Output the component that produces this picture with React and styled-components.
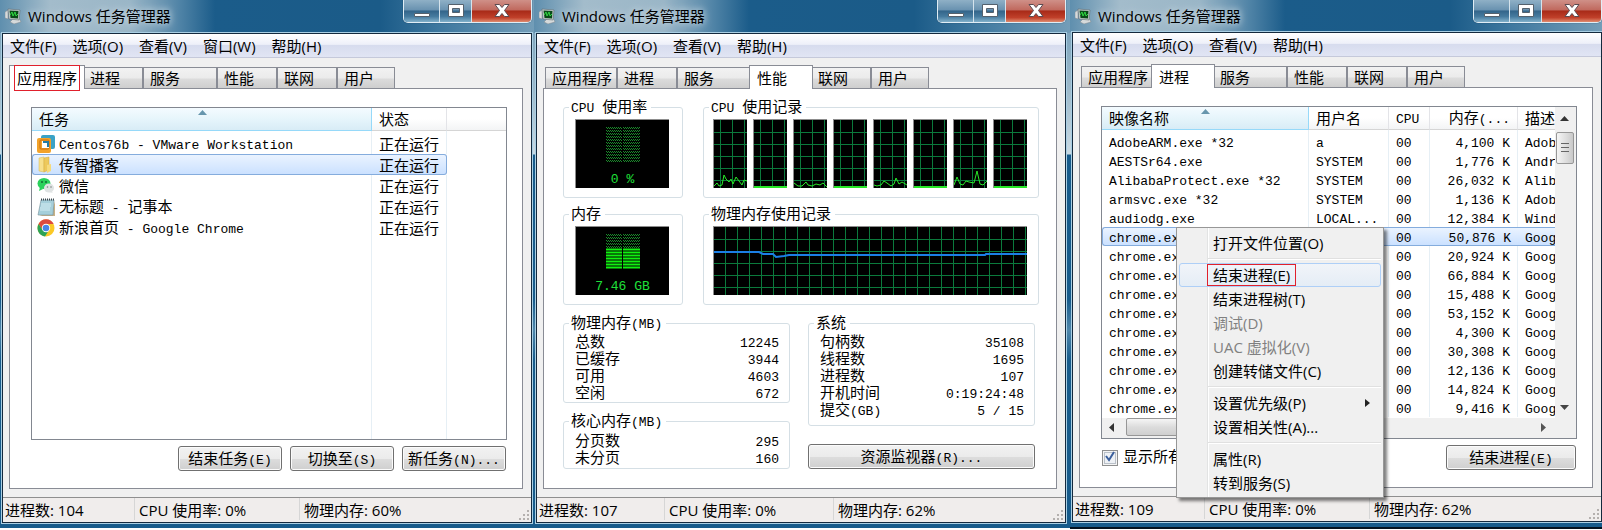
import React from "react";
import styled, { createGlobalStyle, css } from "styled-components";

const uiFont = '"Open Sans", "Noto Sans CJK SC", sans-serif';
const listFont = '"Noto Sans CJK SC", sans-serif';
const monoFont = '"Liberation Mono", "Noto Sans CJK SC", monospace';

const GlobalStyle = createGlobalStyle`
  * { box-sizing: border-box; }
  body { margin: 0; background: #fff; color: #000; font: 15px/20px ${uiFont}; }
  button, input { font: inherit; color: inherit; margin: 0; }
`;

const Desktop = styled.main`
  display: grid;
  grid-template-columns: 534fr 536fr 532fr;
  align-items: start;
  overflow: hidden;
`;

const Frame = styled.section`
  position: relative;
  min-width: 0;
  padding: 0 ${(p) => p.$right}px 5px ${(p) => p.$left}px;
  background: linear-gradient(180deg, #6f9ab6 0, #9db9ca 90px, #c9d9e3 154px, #175b8b 155px, #175b8b 300px, #4f86aa 330px, #175b8b 360px);
  ${(p) => p.$edge && css`border-bottom: 2px solid #04121f;`}
`;

const TitleBar = styled.header`
  display: flex;
  justify-content: space-between;
  align-items: flex-start;
  height: ${(p) => p.$height}px;
  margin: 0 -${(p) => p.$right}px 0 -${(p) => p.$left}px;
  padding-right: ${(p) => p.$right}px;
  background: linear-gradient(90deg, #5f8fae 0, #a3bccb 50px, #9ab6c7 130px, #4f83a6 180px, #1b5c8a 215px, #1b5b88 380px, #3e789f 440px, #739db8 100%);
`;

const Title = styled.h1`
  display: flex;
  align-items: center;
  gap: 6px;
  height: 32px;
  margin: 0;
  padding-left: 5px;
  font-size: 15px;
  font-weight: 400;
  white-space: nowrap;
  text-shadow: 0 0 6px #c4d5df, 0 0 10px #c4d5df;
`;

const Controls = styled.div`
  display: flex;
  height: 23px;
  border: 1px solid #e0edf5;
  border-top: 0;
  border-radius: 0 0 5px 5px;
  overflow: hidden;
  box-shadow: 0 0 1px #0c2b44;
`;

const Control = styled.button`
  display: grid;
  place-items: center;
  width: ${(p) => (p.$close ? 59 : p.$wide ? 36 : 32)}px;
  padding: 0;
  border: 0;
  border-right: ${(p) => (p.$close ? 0 : 1)}px solid #d5e3ec;
  background: ${(p) =>
    p.$close
      ? "linear-gradient(180deg, #cf9088 0, #c0695e 45%, #a82a18 50%, #c0402a 80%, #e08c70 100%)"
      : "linear-gradient(180deg, #8fb0c6 0, #6992b0 45%, #33658a 50%, #467b9f 75%, #82b1cb 100%)"};
`;

const Client = styled.div`
  border: 1px solid #14293d;
  box-shadow: 0 0 0 1px #a9cfe4;
  background: #f0f0f0;
`;

const MenuBar = styled.nav`
  display: flex;
  gap: 16px;
  height: 24px;
  padding-left: 7px;
  border-bottom: 1px solid #c5c9da;
  background: linear-gradient(180deg, #fff 0, #eef0f9 45%, #d7dcee 50%, #e1e5f4 100%);
`;

const MenuButton = styled.button`
  padding: 0;
  border: 0;
  background: none;
  line-height: 24px;
  white-space: nowrap;
`;

const Tabs = styled.div`
  display: flex;
  align-items: flex-end;
  height: 30px;
  padding-left: 8px;
`;

const Tab = styled.button`
  position: relative;
  width: ${(p) => p.$width}px;
  height: 21px;
  padding: 0 0 0 6px;
  border: 1px solid #898c95;
  border-bottom: 0;
  background: linear-gradient(180deg, #f2f2f2 0, #ebebeb 50%, #dcdcdc 55%, #cecece 100%);
  font: 15px/20px ${listFont};
  text-align: left;
  white-space: nowrap;
  ${(p) =>
    p.$selected &&
    css`
      z-index: 1;
      width: ${p.$width + 4}px;
      height: 24px;
      margin: 0 -2px -1px;
      padding-left: 7px;
      background: #fff;
    `}
`;

const Marked = styled.span`
  position: relative;
  &::after {
    content: "";
    position: absolute;
    inset: ${(p) => p.$inset || "-1px -4px"};
    border: 1px solid #e0202c;
  }
`;

const Panel = styled.div`
  margin: 0 8px 8px 6px;
  padding: ${(p) => p.$padding || "18px 15px 17px 21px"};
  border: 1px solid #898c95;
  background: #fff;
`;

const StatusBar = styled.footer`
  display: flex;
  position: relative;
  height: 25px;
  border-top: 1px solid #8f8f8f;
  background: #f0edec;
`;

const StatusCell = styled.span`
  width: ${(p) => (p.$width ? p.$width + "px" : "auto")};
  margin-bottom: 2px;
  padding-left: ${(p) => (p.$first ? 2 : 4)}px;
  border-right: ${(p) => (p.$width ? 1 : 0)}px solid #d6d6d6;
  line-height: 25px;
  white-space: nowrap;
`;

const Grip = styled.svg`
  position: absolute;
  right: 1px;
  bottom: 1px;
`;

const Mono = styled.span`
  font: 13px ${monoFont};
  line-height: inherit;
`;

/* Chinese text keeps the list font; Latin runs are set in the fixed-width one. */
function Mixed({ children }) {
  return String(children)
    .split(/([\x20-\x7e]+)/)
    .filter(Boolean)
    .map((run, i) => (/^[\x20-\x7e]/.test(run) ? <Mono key={i}>{run}</Mono> : run));
}

const ListBox = styled.div`
  display: flex;
  flex-direction: column;
  height: 333px;
  border: 1px solid #828790;
  background: #fff;
`;

const Table = styled.table`
  width: 100%;
  height: ${(p) => (p.$fill ? "100%" : "auto")};
  table-layout: fixed;
  border-collapse: separate;
  border-spacing: 0;
  font: 15px ${listFont};
  white-space: pre;
`;

const Th = styled.th`
  position: relative;
  width: ${(p) => (p.$width ? p.$width + "px" : "auto")};
  height: 23px;
  padding: 0 7px;
  border-right: 1px solid ${(p) => (p.$sorted ? "#96d9f9" : "#e3e4e8")};
  border-bottom: 1px solid ${(p) => (p.$sorted ? "#96d9f9" : "#d5d5d5")};
  background: ${(p) =>
    p.$sorted
      ? "linear-gradient(180deg, #f4fbff 0, #e6f5fb 50%, #d8ecf6 100%)"
      : "linear-gradient(180deg, #fff 0, #fff 50%, #f3f4f5 100%)"};
  line-height: 18px;
  font-weight: 400;
  text-align: ${(p) => (p.$end ? "right" : "left")};
  overflow: hidden;
  &:last-child { border-right: 0; }
`;

const SortArrow = styled.svg`
  position: absolute;
  top: 2px;
  left: 50%;
  margin-left: -4px;
`;

const Td = styled.td`
  height: ${(p) => (p.$height ? p.$height + "px" : "auto")};
  padding: 0 7px;
  border-right: 1px solid #e6eff5;
  line-height: 13px;
  text-align: ${(p) => (p.$end ? "right" : "left")};
  overflow: hidden;
  &:last-child { border-right: 0; }
  ${(p) =>
    p.$selected &&
    css`
      border: solid #84acdd;
      border-width: 1px 0;
      background: linear-gradient(180deg, #eaf3ff, #cbe1ff);
      &:first-child { border-left-width: 1px; padding-left: 6px; border-radius: 3px 0 0 3px; }
      &:nth-child(2) { border-right-width: ${p.$closed ? 1 : 0}px; border-radius: ${p.$closed ? "0 3px 3px 0" : 0}; }
    `}
`;

const TaskName = styled.span`
  display: flex;
  align-items: center;
  gap: 4px;
  height: 19px;
  margin-left: -2px;
`;

const Actions = styled.div`
  display: flex;
  align-items: center;
  justify-content: flex-end;
  gap: 8px;
  margin-top: 6px;
  padding-right: 1px;
`;

const Button = styled.button`
  width: ${(p) => (p.$width ? p.$width + "px" : "100%")};
  height: 25px;
  padding: 0;
  border: 1px solid #707070;
  border-radius: 3px;
  box-shadow: inset 0 0 0 1px #fbfbfb;
  background: linear-gradient(180deg, #f2f2f2 0, #ebebeb 50%, #dddddd 52%, #cfcfcf 100%);
  font: 15px/22px ${listFont};
  white-space: nowrap;
`;

const Row = styled.div`
  display: flex;
  gap: ${(p) => p.$gap}px;
  margin-top: ${(p) => p.$top || 0}px;
  margin-right: ${(p) => p.$right || 0}px;
`;

const Column = styled.div`
  display: flex;
  flex-direction: column;
  flex: 1;
  gap: ${(p) => p.$gap}px;
`;

const Group = styled.fieldset`
  flex: ${(p) => (p.$width ? `0 0 ${p.$width}px` : "1 1 auto")};
  min-width: 0;
  margin: 0;
  padding: ${(p) => p.$padding};
  border: 1px solid #d5dfe5;
  border-radius: 3px;
  font: 15px/16px ${listFont};
`;

const Legend = styled.legend`
  padding: 0 4px 0 2px;
  height: 18px;
  white-space: pre;
`;

const Meter = styled.div`
  display: flex;
  flex-direction: column;
  align-items: center;
  gap: 10px;
  width: 94px;
  height: 69px;
  margin-left: 6px;
  padding-top: 6px;
  border: solid #8c8c8c;
  border-width: 1px 0 0 1px;
  background: #000;
  color: #1fe03a;
  line-height: 16px;
`;

const Charts = styled.div`
  display: flex;
  justify-content: space-between;
  margin: 0 6px 0 4px;
`;

const Chart = styled.svg`
  display: block;
  flex: 0 1 ${(p) => p.$basis};
  min-width: 0;
  height: 69px;
  border: solid #8c8c8c;
  border-width: 1px 0 0 1px;
  background: #000;
`;

const Stats = styled.dl`
  margin: 0;
  padding: 0 5px 0 6px;
`;

const Stat = styled.div`
  display: flex;
  justify-content: space-between;
  line-height: 17px;
  white-space: pre;
  font-size: 15px;
  dt, dd { margin: 0; height: 17px; }
`;

const ListBody = styled.div`
  display: flex;
  height: 311px;
`;

const TableClip = styled.div`
  flex: 1;
  min-width: 0;
  overflow: hidden;
`;

const VScroll = styled.div`
  display: flex;
  flex-direction: column;
  align-items: center;
  width: 21px;
  padding: 9px 2px 8px 0;
  background: #f0f0f0;
`;

const VThumb = styled.div`
  display: grid;
  place-items: center;
  width: 18px;
  height: 32px;
  margin: 11px 0 auto;
  border: 1px solid #979797;
  border-radius: 2px;
  background: linear-gradient(90deg, #f5f5f5, #dcdcdc 60%, #c9c9c9);
`;

const HScroll = styled.div`
  display: flex;
  align-items: center;
  flex: 1;
  padding: 0 30px 2px 7px;
  background: #f0f0f0;
`;

const HThumb = styled.div`
  width: 220px;
  height: 18px;
  margin: 0 auto 0 12px;
  border: 1px solid #979797;
  border-radius: 2px;
  background: linear-gradient(180deg, #f5f5f5, #dcdcdc 50%, #cfcfcf);
`;

const CheckLabel = styled.label`
  display: flex;
  align-items: center;
  position: relative;
  gap: 5px;
  margin: 0 auto 0 1px;
  font: 15px/20px ${listFont};
  white-space: nowrap;
  svg { position: absolute; left: 2px; top: 4px; pointer-events: none; }
`;

const CheckBox = styled.input`
  appearance: none;
  width: 16px;
  height: 16px;
  border: 1px solid #8e8f8f;
  box-shadow: inset 0 0 0 1px #f4f4f4, inset 0 0 0 2px #b9c0c8;
  background: #eef1f5;
`;

const ContextMenu = styled.div`
  position: absolute;
  z-index: 2;
  left: 106px;
  top: 227px;
  width: 208px;
  padding: 3px 2px 2px;
  border: 1px solid #979797;
  box-shadow: 3px 3px 3px rgba(0, 0, 0, 0.5);
  background: linear-gradient(90deg, #f0f0f0 30px, #e2e3e3 30px, #e2e3e3 31px, #fff 31px, #fff 32px, #f0f0f0 32px);
`;

const ContextItem = styled.button`
  display: flex;
  align-items: center;
  justify-content: space-between;
  width: 100%;
  height: 24px;
  padding: 0 10px 0 33px;
  border: 1px solid ${(p) => (p.$hot ? "#aecff7" : "transparent")};
  border-radius: 3px;
  background: ${(p) => (p.$hot ? "linear-gradient(180deg, rgba(241,245,251,.8), rgba(226,236,247,.8))" : "none")};
  line-height: 22px;
  white-space: nowrap;
  &:disabled { color: #808080; }
`;

const Separator = styled.hr`
  height: 2px;
  margin: 3px 0 3px 29px;
  border: 0;
  border-top: 1px solid #e0e0e0;
  background: #fff;
`;

function AppIcon() {
  return (
    <svg width="17" height="16" viewBox="0 0 17 16">
      <path d="M0 4 3 2v9l-3-1zM8 11l6-1 2 4-7 2-4-2z" fill="#d6dadb" stroke="#7c878c" strokeWidth=".5" />
      <path d="M3 1 15 2 14 12 4 11Z" fill="#c9cfd1" stroke="#5f6b70" strokeWidth=".6" />
      <path d="M4.500 2.500 13.500 3 13 10.500 5.500 10Z" fill="#0a4a18" />
      <path d="M5 7 7 4l1 4 2-4 1 4 2-2" fill="none" stroke="#31d843" />
    </svg>
  );
}

const icons = {
  vmware: (
    <>
      <rect x="4" y="0" width="14" height="14" rx="2" fill="#3aa2c6" />
      <rect x="0" y="3" width="14" height="15" rx="2" fill="#f3a32a" />
      <rect x="3" y="5" width="9" height="9" rx="1" fill="none" stroke="#c46c12" />
      <rect x="5" y="6" width="7" height="7" fill="#fff" />
      <path d="M6 6h6v6h-2V8H6z" fill="#237ba5" />
    </>
  ),
  folder: (
    <>
      <path d="M2 2 7 1v15l-5-1z" fill="#f7e08c" stroke="#d9b950" strokeWidth=".5" />
      <path d="M7 2 12 1v13l-5 2z" fill="#edc95c" stroke="#d4a93b" strokeWidth=".5" />
      <path d="M10 9 14 8v7l-4 2z" fill="#f6da7c" />
    </>
  ),
  wechat: (
    <>
      <ellipse cx="7" cy="6.500" rx="6.500" ry="5.500" fill="#2bd15c" />
      <path d="M3 10 2 14l4-2z" fill="#2bd15c" />
      <ellipse cx="12" cy="11" rx="5" ry="4.500" fill="#dfe3e3" />
      <path d="M14 14l2 2-4-1z" fill="#dfe3e3" />
      <g fill="#126b30"><circle cx="5" cy="5" r="1" /><circle cx="9" cy="5" r="1" /></g>
      <g fill="#7c8585"><circle cx="10.500" cy="10" r=".8" /><circle cx="14" cy="10" r=".8" /></g>
    </>
  ),
  notepad: (
    <>
      <path d="M15 14 18 3v15H2z" fill="#b99d68" opacity=".8" />
      <path d="M4 2h13l-1 15H1z" fill="#a5cfda" stroke="#76909a" strokeWidth=".6" />
      <path d="M4 6h10M4 8h10M3 10h10M3 12h10" stroke="#d5edf2" />
      <path d="M4 1.500h13" stroke="#3e4c52" strokeWidth="2" strokeDasharray="1 1" />
    </>
  ),
  chrome: (
    <>
      <circle cx="9" cy="9" r="8.500" fill="#fbc926" />
      <path d="M1.500 5A8.500 8.500 0 0 1 16.700 5H9a4 4 0 0 0-4 5z" fill="#dd4b3e" />
      <path d="M1.500 5A8.500 8.500 0 0 0 8 17.500L12 11a4 4 0 0 1-7-1z" fill="#2ea356" />
      <circle cx="9" cy="9" r="4.200" fill="#fff" />
      <circle cx="9" cy="9" r="3.300" fill="#4a86e6" />
    </>
  ),
};

const tabList = [
  ["应用程序", 72],
  ["进程", 60],
  ["服务", 74],
  ["性能", 60],
  ["联网", 60],
  ["用户", 58],
];

function TaskWindow({ left, right, titleHeight = 33, edge, menus, active, markTab, status, panelPadding, overlay, children }) {
  return (
    <Frame $left={left} $right={right} $edge={edge}>
      <TitleBar $height={titleHeight} $left={left} $right={right}>
        <Title><AppIcon />Windows 任务管理器</Title>
        <Controls>
          <Control $wide aria-label="最小化">
            <svg width="18" height="16"><path d="M1.500 10.500h15v3h-15z" fill="#fff" stroke="#54616d" /></svg>
          </Control>
          <Control aria-label="最大化">
            <svg width="18" height="16"><path d="M1.500 1.500h15v12h-15zM5.500 5.500v4h7v-4z" fillRule="evenodd" fill="#fff" stroke="#54616d" /></svg>
          </Control>
          <Control $close aria-label="关闭">
            <svg width="18" height="16"><path d="M2 1.500h4.500L9 4.500l2.500-3H16L11.500 7.500l4.500 6h-4.500L9 10.500l-2.500 3H2l4.500-6z" fill="#fff" stroke="#5b4a50" /></svg>
          </Control>
        </Controls>
      </TitleBar>
      <Client>
        <MenuBar>{menus.map((m) => <MenuButton key={m}>{m}</MenuButton>)}</MenuBar>
        <Tabs role="tablist">
          {tabList.map(([name, width]) => (
            <Tab key={name} role="tab" aria-selected={name === active} $width={width} $selected={name === active}>
              {markTab && name === active ? <Marked $inset="-2px -3px -3px">{name}</Marked> : name}
            </Tab>
          ))}
        </Tabs>
        <Panel $padding={panelPadding}>{children}</Panel>
        <StatusBar>
          <StatusCell $first $width={status.widths[0]}>进程数: {status.count}</StatusCell>
          <StatusCell $width={status.widths[1]}>CPU 使用率: 0%</StatusCell>
          <StatusCell>物理内存: {status.memory}</StatusCell>
          <Grip width="12" height="12" fill="#b4b0ae">
            <path d="M9 1h2v2H9zM9 5h2v2H9zM5 5h2v2H5zM9 9h2v2H9zM5 9h2v2H5zM1 9h2v2H1z" />
          </Grip>
        </StatusBar>
      </Client>
      {overlay}
    </Frame>
  );
}

function Arrow() {
  return <SortArrow width="9" height="5"><path d="M0 5 4.500 0 9 5z" fill="#6796ad" /></SortArrow>;
}

function Spacer({ columns, height }) {
  return (
    <tr aria-hidden="true">
      {Array.from({ length: columns }, (_, i) => <Td key={i} $height={height} />)}
    </tr>
  );
}

const tasks = [
  ["vmware", "Centos76b - VMware Workstation"],
  ["folder", "传智播客"],
  ["wechat", "微信"],
  ["notepad", "无标题 - 记事本"],
  ["chrome", "新浪首页 - Google Chrome"],
];

function Applications() {
  return (
    <>
      <ListBox>
        <Table $fill>
          <thead>
            <tr>
              <Th $sorted>任务<Arrow /></Th>
              <Th $width={75}>状态</Th>
              <Th $width={59} />
            </tr>
          </thead>
          <tbody>
            <Spacer columns={3} height={2} />
            {tasks.map(([icon, name], i) => (
              <tr key={name}>
                <Td $height={21} $selected={i === 1}>
                  <TaskName><svg width="18" height="18">{icons[icon]}</svg><span><Mixed>{name}</Mixed></span></TaskName>
                </Td>
                <Td $height={21} $selected={i === 1} $closed>正在运行</Td>
                <Td $height={21} />
              </tr>
            ))}
            <Spacer columns={3} />
          </tbody>
        </Table>
      </ListBox>
      <Actions>
        <Button $width={104}><Mixed>结束任务(E)</Mixed></Button>
        <Button $width={104}><Mixed>切换至(S)</Mixed></Button>
        <Button $width={104}><Mixed>新任务(N)...</Mixed></Button>
      </Actions>
    </>
  );
}

function LevelMeter({ lit, label }) {
  const rows = Array.from({ length: 12 }, (_, i) => i);
  return (
    <Meter>
      <svg width="34" height="36">
        {rows.map((i) => {
          const on = i >= 12 - lit;
          return (
            <g key={i} stroke={on ? "#10f010" : "#1b8a2b"} strokeWidth={on ? 2 : 1} strokeDasharray={on ? "none" : "1 1"}>
              <path d={`M0 ${i * 3 + 1}.500h16M17 ${i * 3 + 1}.500h17`} />
              {!on && <path d={`M1 ${i * 3 + 2}.500h15M18 ${i * 3 + 2}.500h16`} />}
            </g>
          );
        })}
      </svg>
      <Mono>{label}</Mono>
    </Meter>
  );
}

function gridPath(width, start) {
  let d = "";
  for (let x = start; x < width; x += 12) d += `M${x}.5 0v68`;
  for (let y = 12; y < 68; y += 12) d += `M0 ${y}.5h${width}`;
  return d;
}

const idle = "M0 67h33";
const cpuLines = [
  "M0 66 3 63 5 66 8 65 10 55 12 59 15 62 17 59 19 64 22 57 25 61 28 65 30 60 33 61",
  idle,
  "M0 63 4 66 8 66 12 62 14 65 18 66 22 64 26 65 29 63 33 67",
  idle,
  "M0 65 3 66 7 65 10 61 13 63 17 66 20 64 22 58 25 64 28 62 33 65",
  idle,
  "M0 65 3 57 6 64 9 65 12 61 15 62 20 63 23 51 26 64 29 65 33 61",
  idle,
];

function StatGroup({ title, padding, rows }) {
  return (
    <Group $padding={padding}>
      <Legend><Mixed>{title}</Mixed></Legend>
      <Stats>
        {rows.map(([k, v]) => (
          <Stat key={k}><dt><Mixed>{k}</Mixed></dt><dd><Mono>{v}</Mono></dd></Stat>
        ))}
      </Stats>
    </Group>
  );
}

function Performance() {
  return (
    <>
      <Row $gap={20}>
        <Group $width={120} $padding="3px 5px 9px"><Legend><Mixed>CPU 使用率</Mixed></Legend><LevelMeter lit={0} label="0 %" /></Group>
        <Group $padding="3px 5px 9px">
          <Legend><Mixed>CPU 使用记录</Mixed></Legend>
          <Charts>
            {cpuLines.map((d, i) => (
              <Chart key={i} $basis="34px" viewBox="0 0 33 68" preserveAspectRatio="none">
                <path d={gridPath(33, 6)} stroke="#0b7a3c" />
                <path d={d} fill="none" stroke="#28e828" strokeWidth={d === idle ? 2 : 1} />
              </Chart>
            ))}
          </Charts>
        </Group>
      </Row>
      <Row $gap={20} $top={7}>
        <Group $width={120} $padding="3px 5px 9px"><Legend>内存</Legend><LevelMeter lit={7} label="7.46 GB" /></Group>
        <Group $padding="3px 5px 9px">
          <Legend>物理内存使用记录</Legend>
          <Charts>
            <Chart $basis="100%" viewBox="0 0 313 68" preserveAspectRatio="none">
              <path d={gridPath(313, 11)} stroke="#0b7a3c" />
              <path d="M0 25h45l4 2h10l3 3 8-1 5-1h196l1-1h41" fill="none" stroke="#1b7fe6" strokeWidth="2" />
            </Chart>
          </Charts>
        </Group>
      </Row>
      <Row $gap={18} $top={9} $right={4}>
        <Column $gap={9}>
          <StatGroup title="物理内存(MB)" padding="0 5px 2px" rows={[["总数", "12245"], ["已缓存", "3944"], ["可用", "4603"], ["空闲", "672"]]} />
          <StatGroup title="核心内存(MB)" padding="1px 5px 3px" rows={[["分页数", "295"], ["未分页", "160"]]} />
        </Column>
        <Column $gap={18}>
          <StatGroup
            title="系统"
            padding="0 5px 6px"
            rows={[["句柄数", "35108"], ["线程数", "1695"], ["进程数", "107"], ["开机时间", "0:19:24:48"], ["提交(GB)", "5 / 15"]]}
          />
          <Button><Mixed>资源监视器(R)...</Mixed></Button>
        </Column>
      </Row>
    </>
  );
}

const processes = [
  ["AdobeARM.exe *32", "a", "4,100 K", "Adobe"],
  ["AESTSr64.exe", "SYSTEM", "1,776 K", "Andrea"],
  ["AlibabaProtect.exe *32", "SYSTEM", "26,032 K", "Alibaba"],
  ["armsvc.exe *32", "SYSTEM", "1,136 K", "Adobe"],
  ["audiodg.exe", "LOCAL...", "12,384 K", "Windows"],
  ...["50,876", "20,924", "66,884", "15,488", "53,152", "4,300", "30,308", "12,136", "14,824", "9,416"].map((m) => [
    "chrome.exe", "a", `${m} K`, "Google",
  ]),
];

function Processes() {
  return (
    <>
      <ListBox>
        <ListBody>
          <TableClip>
            <Table>
              <thead>
                <tr>
                  <Th $sorted>映像名称<Arrow /></Th>
                  <Th $width={80}>用户名</Th>
                  <Th $width={41}><Mono>CPU</Mono></Th>
                  <Th $width={88} $end><Mixed>内存(...</Mixed></Th>
                  <Th $width={37}>描述</Th>
                </tr>
              </thead>
              <tbody>
                <Spacer columns={5} height={2} />
                {processes.map(([name, user, memory, info], i) => {
                  const look = { $height: 19, $selected: i === 5 };
                  return (
                    <tr key={i}>
                      <Td {...look}><Mono>{name}</Mono></Td>
                      <Td {...look}><Mono>{user}</Mono></Td>
                      <Td {...look}><Mono>00</Mono></Td>
                      <Td {...look} $end><Mono>{memory}</Mono></Td>
                      <Td {...look}><Mono>{info}</Mono></Td>
                    </tr>
                  );
                })}
              </tbody>
            </Table>
          </TableClip>
          <VScroll>
            <svg width="9" height="5"><path d="M0 5 4.500 0 9 5z" fill="#333" /></svg>
            <VThumb><svg width="8" height="10"><path d="M0 .5h8M0 4.500h8M0 8.500h8" stroke="#666" /></svg></VThumb>
            <svg width="9" height="5"><path d="M0 0 4.500 5 9 0z" fill="#444" /></svg>
          </VScroll>
        </ListBody>
        <HScroll>
          <svg width="5" height="9"><path d="M5 0 0 4.500 5 9z" fill="#333" /></svg>
          <HThumb />
          <svg width="5" height="9"><path d="M0 0 5 4.500 0 9z" fill="#555" /></svg>
        </HScroll>
      </ListBox>
      <Actions>
        <CheckLabel>
          <CheckBox type="checkbox" defaultChecked />
          <svg width="12" height="13"><path d="M2 6 5 10 10 2" fill="none" stroke="#3b5f9c" strokeWidth="2" /></svg>
          <span><Mixed>显示所有用户的进程(S)</Mixed></span>
        </CheckLabel>
        <Button $width={130}><Mixed>结束进程(E)</Mixed></Button>
      </Actions>
    </>
  );
}

function ProcessMenu() {
  return (
    <ContextMenu role="menu">
      <ContextItem role="menuitem">打开文件位置(O)</ContextItem>
      <Separator />
      <ContextItem role="menuitem" $hot><Marked $inset="0 -6px">结束进程(E)</Marked></ContextItem>
      <ContextItem role="menuitem">结束进程树(T)</ContextItem>
      <ContextItem role="menuitem" disabled>调试(D)</ContextItem>
      <ContextItem role="menuitem" disabled>UAC 虚拟化(V)</ContextItem>
      <ContextItem role="menuitem">创建转储文件(C)</ContextItem>
      <Separator />
      <ContextItem role="menuitem">
        设置优先级(P)
        <svg width="5" height="8"><path d="M0 0 5 4 0 8z" fill="#222" /></svg>
      </ContextItem>
      <ContextItem role="menuitem">设置相关性(A)...</ContextItem>
      <Separator />
      <ContextItem role="menuitem">属性(R)</ContextItem>
      <ContextItem role="menuitem">转到服务(S)</ContextItem>
    </ContextMenu>
  );
}

const shortMenus = ["文件(F)", "选项(O)", "查看(V)", "帮助(H)"];

export default function App() {
  return (
    <>
      <GlobalStyle />
      <Desktop>
        <TaskWindow
          left={2}
          right={2}
          menus={["文件(F)", "选项(O)", "查看(V)", "窗口(W)", "帮助(H)"]}
          active="应用程序"
          markTab
          status={{ count: 104, memory: "60%", widths: [132, 165] }}
        >
          <Applications />
        </TaskWindow>
        <TaskWindow
          left={2}
          right={4}
          menus={shortMenus}
          active="性能"
          panelPadding="9px 17px 19px 19px"
          status={{ count: 107, memory: "62%", widths: [128, 169] }}
        >
          <Performance />
        </TaskWindow>
        <TaskWindow
          left={2}
          right={0}
          titleHeight={32}
          edge
          menus={shortMenus}
          active="进程"
          status={{ count: 109, memory: "62%", widths: [132, 165] }}
          overlay={<ProcessMenu />}
        >
          <Processes />
        </TaskWindow>
      </Desktop>
    </>
  );
}
